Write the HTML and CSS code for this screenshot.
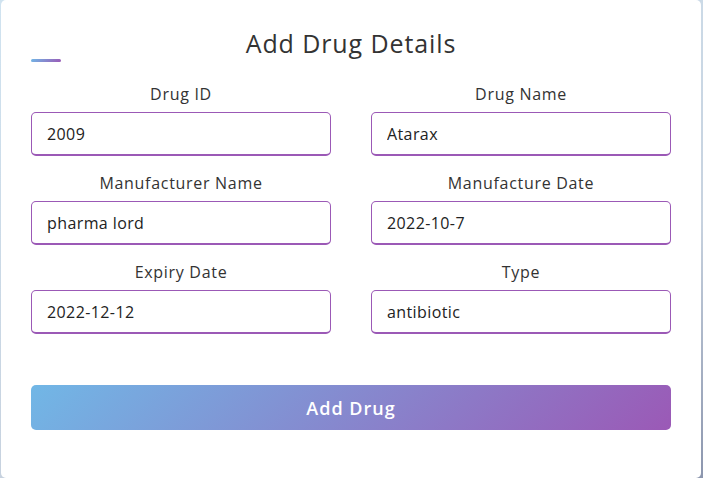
FILE: index.html
```html
<!DOCTYPE html>
<html lang="en">
<head>
<meta charset="utf-8">
<title>Add Drug Details</title>
<link rel="stylesheet" href="styles.css">
</head>
<body>
<div class="container">
  <div class="title">Add Drug Details</div>
  <form class="form">
    <div class="user-details">
      <div class="input-box">
        <span class="details">Drug ID</span>
        <input type="text" value="2009">
      </div>
      <div class="input-box">
        <span class="details">Drug Name</span>
        <input type="text" value="Atarax">
      </div>
      <div class="input-box">
        <span class="details">Manufacturer Name</span>
        <input type="text" value="pharma lord">
      </div>
      <div class="input-box">
        <span class="details">Manufacture Date</span>
        <input type="text" value="2022-10-7">
      </div>
      <div class="input-box">
        <span class="details">Expiry Date</span>
        <input type="text" value="2022-12-12">
      </div>
      <div class="input-box">
        <span class="details">Type</span>
        <input type="text" value="antibiotic">
      </div>
    </div>
    <button type="button" class="button">Add Drug</button>
  </form>
</div>
</body>
</html>
```

FILE: styles.css
```css
* {
  box-sizing: border-box;
  margin: 0;
  padding: 0;
}

html, body {
  height: 100%;
}

body {
  font-family: "Open Sans", "Liberation Sans", sans-serif;
  background: linear-gradient(160deg, #d0e3f0 0%, #c7d2df 65%, #8c96ae 100%);
  overflow: hidden;
}

.container {
  width: 700px;
  min-height: 100%;
  margin-left: 1px;
  background: #fff;
  border-radius: 5px;
  padding: 25px 30px;
}

.title {
  position: relative;
  font-size: 25px;
  line-height: 37px;
  font-weight: 500;
  letter-spacing: 0.9px;
  color: #333;
  text-align: center;
}

.title::before {
  content: "";
  position: absolute;
  left: 0;
  bottom: 0;
  width: 30px;
  height: 3px;
  border-radius: 5px;
  background: linear-gradient(135deg, #71b7e6, #9b59b6);
}

.form {
  padding-top: 20px;
}

.user-details {
  display: flex;
  flex-wrap: wrap;
  justify-content: space-between;
}

.input-box {
  width: calc(50% - 20px);
  margin-bottom: 15px;
  display: flex;
  flex-direction: column;
  align-items: center;
}

.details {
  display: block;
  font-size: 16px;
  line-height: 24px;
  font-weight: 500;
  letter-spacing: 0.7px;
  color: #333;
  margin-bottom: 6px;
}

.input-box input {
  width: 100%;
  height: 44px;
  padding-left: 15px;
  font-family: inherit;
  font-size: 16px;
  letter-spacing: 0.4px;
  color: #222;
  background: #fff;
  border: 1px solid #9b59b6;
  border-bottom-width: 2px;
  border-radius: 5px;
  outline: none;
}

.button {
  display: block;
  width: 100%;
  height: 45px;
  margin-top: 36px;
  border: none;
  border-radius: 5px;
  color: #fff;
  font-family: inherit;
  font-size: 18px;
  font-weight: 600;
  letter-spacing: 1px;
  background: linear-gradient(135deg, #71b7e6, #9b59b6);
  cursor: pointer;
}
```
